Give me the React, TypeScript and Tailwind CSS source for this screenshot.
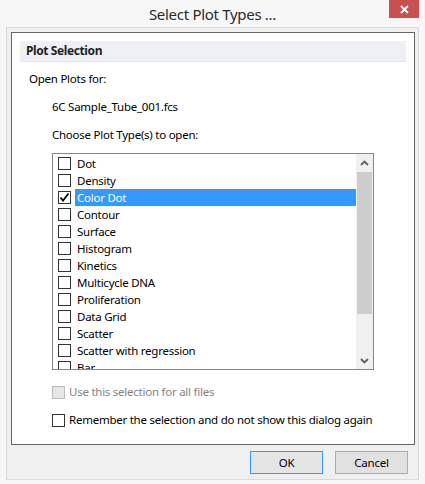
import React from 'react';

const plotTypes = [
  'Dot',
  'Density',
  'Color Dot',
  'Contour',
  'Surface',
  'Histogram',
  'Kinetics',
  'Multicycle DNA',
  'Proliferation',
  'Data Grid',
  'Scatter',
  'Scatter with regression',
  'Bar',
];

const CheckBox = ({ checked = false, disabled = false }: { checked?: boolean; disabled?: boolean }) => (
  <div
    className={`w-[13px] h-[13px] shrink-0 border flex items-center justify-center ${
      disabled ? 'border-[#bcbcbc] bg-[#e6e6e6]' : 'border-[#333333] bg-white'
    }`}
  >
    {checked && (
      <svg width="11" height="11" viewBox="0 0 11 11">
        <path d="M1.5 5.5 L4 8.5 L9.5 1.5" fill="none" stroke="#000" strokeWidth="1.8" />
      </svg>
    )}
  </div>
);

const App = () => {
  return (
    <div className="w-[425px] h-[484px] bg-[#f7f7f7] font-['Noto_Sans',sans-serif] text-[11.5px] tracking-[-0.25px] text-black overflow-hidden">
      {/* Title bar */}
      <div className="relative h-[27px] flex items-center justify-center">
        <span className="text-[15px] text-[#2b2b2b] tracking-[-0.3px] pt-[1px]">Select Plot Types ...</span>
        <div className="absolute right-[6px] top-0 w-[30px] h-[18px] bg-[#c75050] flex items-center justify-center">
          <svg width="9" height="9" viewBox="0 0 9 9">
            <path d="M1 1 L8 8 M8 1 L1 8" stroke="#fff" strokeWidth="1.8" />
          </svg>
        </div>
      </div>

      {/* Client area */}
      <div className="mx-[6px] h-[453px] border border-[#dadada] bg-[#f0f0f0] pl-[4px] pt-[4px]">
        <div className="w-[404px] h-[413px] border border-[#646464] bg-white">
          <div className="ml-[8px] mt-[8px] w-[386px] h-[21px] bg-[#eef0f5] border-b border-[#e3e6ec] flex items-center pl-[6px] font-bold text-[12px] tracking-[-0.4px] text-[#1e1e1e]">
            Plot Selection
          </div>

          <div className="mt-[7px] h-[20px] leading-[20px] pl-[17px]">Open Plots for:</div>
          <div className="mt-[8px] h-[20px] leading-[20px] pl-[40px]">6C Sample_Tube_001.fcs</div>
          <div className="mt-[8px] h-[20px] leading-[20px] pl-[40px]">Choose Plot Type(s) to open:</div>

          {/* List box */}
          <div className="ml-[40px] mt-[8px] w-[322px] h-[217px] border border-[#828790] flex overflow-hidden">
            <div className="flex-1 pt-[1px] overflow-hidden">
              {plotTypes.map((t) => {
                const selected = t === 'Color Dot';
                return (
                  <div key={t} className="h-[17px] flex items-center pl-[5px]">
                    <CheckBox checked={selected} />
                    <div
                      className={`ml-[4px] flex-1 h-[17px] leading-[17px] pl-[2px] ${
                        selected ? 'bg-[#3399ff] text-white' : ''
                      }`}
                    >
                      {t}
                    </div>
                  </div>
                );
              })}
            </div>
            <div className="w-[17px] bg-[#f0f0f0] flex flex-col">
              <div className="h-[18px] flex items-center justify-center">
                <svg width="9" height="6" viewBox="0 0 9 6">
                  <path d="M1 5 L4.5 1.5 L8 5" fill="none" stroke="#606060" strokeWidth="1.8" />
                </svg>
              </div>
              <div className="h-[142px] bg-[#cdcdcd] mx-[1px]" />
              <div className="flex-1" />
              <div className="h-[17px] flex items-center justify-center">
                <svg width="9" height="6" viewBox="0 0 9 6">
                  <path d="M1 1 L4.5 4.5 L8 1" fill="none" stroke="#606060" strokeWidth="1.8" />
                </svg>
              </div>
            </div>
          </div>

          <div className="mt-[12px] h-[20px] flex items-center pl-[40px]">
            <CheckBox disabled />
            <span className="ml-[4px] text-[#838383]">Use this selection for all files</span>
          </div>
          <div className="mt-[8px] h-[20px] flex items-center pl-[40px]">
            <CheckBox />
            <span className="ml-[4px]">Remember the selection and do not show this dialog again</span>
          </div>
        </div>

        {/* Footer buttons */}
        <div className="flex justify-end gap-[12px] pr-[10px] mt-[6px]">
          <button className="w-[73px] h-[23px] border border-[#3399ff] bg-[#e5e5e5] text-black">OK</button>
          <button className="w-[73px] h-[23px] border border-[#acacac] bg-[#e1e1e1] text-black">Cancel</button>
        </div>
      </div>
    </div>
  );
};

export default App;
